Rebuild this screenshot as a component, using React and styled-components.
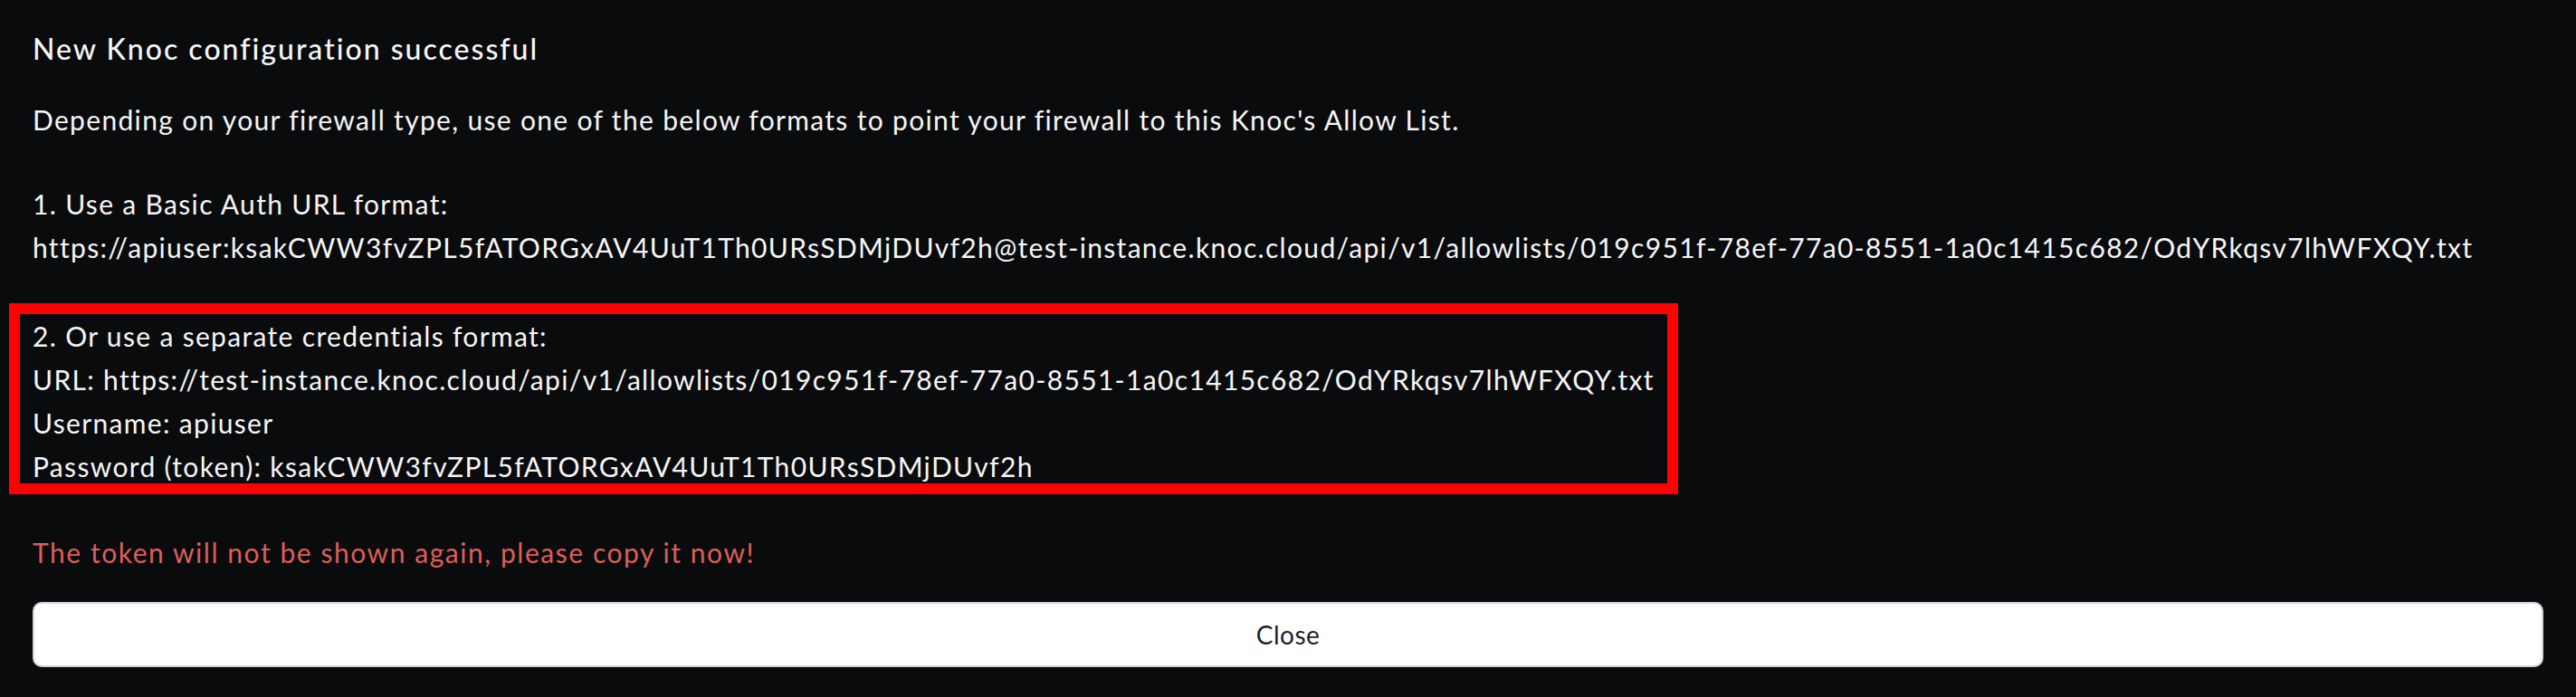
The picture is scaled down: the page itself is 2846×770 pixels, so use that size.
import React from 'react';
import styled, { createGlobalStyle } from 'styled-components';

const basicAuthUrl =
  'https://apiuser:ksakCWW3fvZPL5fATORGxAV4UuT1Th0URsSDMjDUvf2h@test-instance.knoc.cloud/api/v1/allowlists/019c951f-78ef-77a0-8551-1a0c1415c682/OdYRkqsv7lhWFXQY.txt';
const plainUrl =
  'https://test-instance.knoc.cloud/api/v1/allowlists/019c951f-78ef-77a0-8551-1a0c1415c682/OdYRkqsv7lhWFXQY.txt';
const token = 'ksakCWW3fvZPL5fATORGxAV4UuT1Th0URsSDMjDUvf2h';

const App = () => {
  return (
    <>
      <GlobalStyle />
      <Modal>
        <Title>New Knoc configuration successful</Title>
        <Body>
          <Line>
            Depending on your firewall type, use one of the below formats to point your firewall to
            this Knoc's Allow List.
          </Line>
          <Spacer />
          <Line>1. Use a Basic Auth URL format:</Line>
          <Line>{basicAuthUrl}</Line>
          <Highlight>
            <Line>2. Or use a separate credentials format:</Line>
            <Line>URL: {plainUrl}</Line>
            <Line>Username: apiuser</Line>
            <Line>Password (token): {token}</Line>
          </Highlight>
          <Warning>The token will not be shown again, please copy it now!</Warning>
        </Body>
        <CloseButton type="button">Close</CloseButton>
      </Modal>
    </>
  );
};

const GlobalStyle = createGlobalStyle`
  html, body {
    margin: 0;
    padding: 0;
    background-color: #0a0b0d;
  }
`;

const Modal = styled.div`
  display: flex;
  flex-direction: column;
  width: 2846px;
  height: 770px;
  padding: 0 36px;
  box-sizing: border-box;
  background-color: #0a0b0d;
  color: #f5f5f5;
  font-family: Lato, 'Open Sans', sans-serif;
  overflow: hidden;
`;

const Title = styled.h3`
  margin: 0;
  padding-top: 34px;
  font-size: 32px;
  font-weight: 500;
  line-height: 40px;
  letter-spacing: 2px;
`;

const Body = styled.div`
  display: flex;
  flex-direction: column;
  align-items: flex-start;
  margin-top: 34px;
  font-size: 30px;
  line-height: 48px;
  letter-spacing: 1.33px;
`;

const Line = styled.div`
  white-space: nowrap;
`;

const Spacer = styled.div`
  height: 45px;
`;

const Highlight = styled.div`
  display: flex;
  flex-direction: column;
  margin: 38px 0 0 -26px;
  padding: 0 14px;
  border: 12px solid #ff0000;

  & > div:last-child {
    margin-bottom: -5px;
  }
`;

const Warning = styled.div`
  margin-top: 40px;
  color: #dc5f58;
  letter-spacing: 1.55px;
`;

const CloseButton = styled.button`
  width: 100%;
  height: 72px;
  margin-top: 31px;
  border: 2px solid #d1d5db;
  border-radius: 10px;
  background-color: #ffffff;
  color: #1a1f2e;
  font-family: Lato, 'Open Sans', sans-serif;
  font-size: 28px;
  letter-spacing: 0.5px;
  cursor: pointer;
`;

export default App;
